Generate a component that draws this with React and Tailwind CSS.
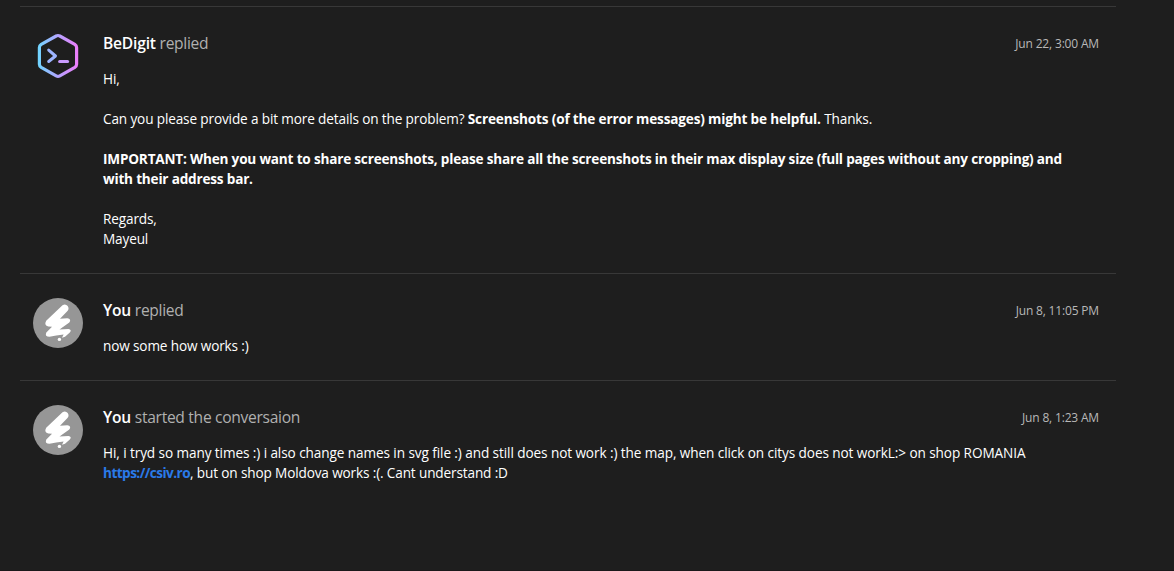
import React from 'react';

const BotAvatar = () => (
  <svg className="w-[50px] h-[50px]" viewBox="0 0 50 50" fill="none">
    <defs>
      <linearGradient id="botGradient" gradientUnits="userSpaceOnUse" x1="5" y1="25" x2="45" y2="25">
        <stop offset="0" stopColor="#6fd6ff" />
        <stop offset="0.5" stopColor="#b3a4ff" />
        <stop offset="1" stopColor="#ee7dfb" />
      </linearGradient>
    </defs>
    <g stroke="url(#botGradient)" strokeWidth="3.2" strokeLinecap="round" strokeLinejoin="round">
      <path d="M23.2 5 L8.2 13.4 Q6.4 14.5 6.4 16.6 V33.2 Q6.4 35.3 8.2 36.4 L23.2 44.9 Q25 45.9 26.8 44.9 L41.8 36.4 Q43.6 35.3 43.6 33.2 V16.6 Q43.6 14.5 41.8 13.4 L26.8 5 Q25 4 23.2 5 Z" />
    </g>
    <path d="M15.7 19.1 L22.5 25 L15.7 30.5" stroke="#9db4ff" strokeWidth="3" strokeLinecap="round" strokeLinejoin="round" />
    <path d="M26.6 30.4 H34.6" stroke="#c99aff" strokeWidth="3" strokeLinecap="round" />
  </svg>
);

const UserAvatar = () => (
  <svg className="w-[50px] h-[50px]" viewBox="0 0 50 50" fill="none">
    <circle cx="25" cy="25" r="25" fill="#969696" />
    <path
      d="M29.5 7.2 Q32.5 5.3 34.7 8 Q36.7 11 34 13.6 L27 20.8 L34.3 20.3 Q38.8 21 36.3 24.6 L26.5 31.6 L35.5 30.9 Q39.2 31.8 36.8 34.4 L32 38.8 L29 39.7 L30.6 36.4 Q23 37.2 16.5 38.8 Q11.5 38.6 13.3 34.4 L19 28.8 L15.3 28.6 Q10.8 27.2 13.2 22.8 Z"
      fill="#fff"
    />
    <circle cx="26.4" cy="41.4" r="1.7" fill="#fff" />
  </svg>
);

const Message = ({ avatar, name, action, date, children }) => (
  <article className="flex gap-5 border-t border-[#383838] py-6 pl-[13px] pr-[17px]">
    <div className="shrink-0">{avatar}</div>
    <div className="flex-1 min-w-0">
      <header className="flex justify-between h-6 text-[15.6px] leading-[25px]">
        <h2 className="text-[#b0b0b0] tracking-[-0.3px]">
          <span className="font-semibold text-white tracking-[-0.2px]">{name}</span> {action}
        </h2>
        <time className="text-[12px] text-[#b8b8b8] tracking-[-0.17px]">{date}</time>
      </header>
      <div className="mt-3.5 text-[13.6px] leading-5 tracking-[-0.14px] text-white whitespace-nowrap">{children}</div>
    </div>
  </article>
);

const App = () => {
  return (
    <div className="h-[571px] overflow-hidden bg-[#1e1e1e] border-b border-[#1a181a] pt-1.5 pl-5 pr-[58px] font-['Open_Sans','Noto_Sans',sans-serif]">
      <Message avatar={<BotAvatar />} name="BeDigit" action="replied" date="Jun 22, 3:00 AM">
        <p>Hi,</p>
        <p className="mt-5">
          Can you please provide a bit more details on the problem?{' '}
          <strong className="tracking-[-0.17px]">Screenshots (of the error messages) might be helpful.</strong> Thanks.
        </p>
        <p className="mt-5 font-bold tracking-[-0.2px]">
          IMPORTANT: When you want to share screenshots, please share all the screenshots in their max display size (full pages without any cropping) and
          <br />
          with their address bar.
        </p>
        <p className="mt-5">
          Regards,
          <br />
          Mayeul
        </p>
      </Message>
      <Message avatar={<UserAvatar />} name="You" action="replied" date="Jun 8, 11:05 PM">
        <p>now some how works :)</p>
      </Message>
      <Message avatar={<UserAvatar />} name="You" action="started the conversaion" date="Jun 8, 1:23 AM">
        <p>
          <span className="tracking-[-0.09px]">
            Hi, i tryd so many times :) i also change names in svg file :) and still does not work :) the map, when click on citys does not workL:&gt; on shop ROMANIA
          </span>
          <br />
          <a href="https://csiv.ro" className="font-bold text-[#2a7ae8] tracking-[-0.55px]">https://csiv.ro</a>, but on shop Moldova works :(. Cant understand :D
        </p>
      </Message>
    </div>
  );
};

export default App;
